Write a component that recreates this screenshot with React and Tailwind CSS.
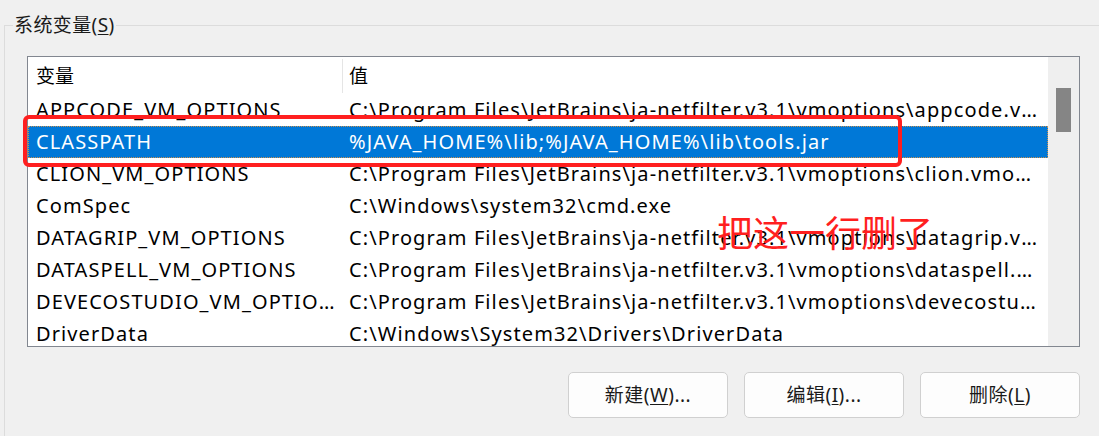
import React from "react";

const rows = [
  { name: "APPCODE_VM_OPTIONS", value: "C:\\Program Files\\JetBrains\\ja-netfilter.v3.1\\vmoptions\\appcode.vmoptions" },
  { name: "CLASSPATH", value: "%JAVA_HOME%\\lib;%JAVA_HOME%\\lib\\tools.jar", selected: true },
  { name: "CLION_VM_OPTIONS", value: "C:\\Program Files\\JetBrains\\ja-netfilter.v3.1\\vmoptions\\clion.vmoptions" },
  { name: "ComSpec", value: "C:\\Windows\\system32\\cmd.exe" },
  { name: "DATAGRIP_VM_OPTIONS", value: "C:\\Program Files\\JetBrains\\ja-netfilter.v3.1\\vmoptions\\datagrip.vmoptions" },
  { name: "DATASPELL_VM_OPTIONS", value: "C:\\Program Files\\JetBrains\\ja-netfilter.v3.1\\vmoptions\\dataspell.vmoptions" },
  { name: "DEVECOSTUDIO_VM_OPTIONS", value: "C:\\Program Files\\JetBrains\\ja-netfilter.v3.1\\vmoptions\\devecostudio.vmoptions" },
  { name: "DriverData", value: "C:\\Windows\\System32\\Drivers\\DriverData" },
];

const font = "font-['Noto_Sans','Noto_Sans_CJK_SC',sans-serif]";

function Button({ label, keyChar, dots }) {
  return (
    <button className="w-[160px] h-[46px] rounded-[5px] border border-[#d0d0d0] bg-[#fdfdfd] text-[19px] tracking-[0.5px] text-[#1a1a1a]">
      {label}(<span className="underline underline-offset-2">{keyChar}</span>){dots ? "..." : ""}
    </button>
  );
}

export default function App() {
  return (
    <div className={`${font} relative w-[1099px] h-[436px] bg-[#f0f0f0] pt-[25px] pl-[4px] overflow-hidden text-black`}>
      {/* Group box */}
      <div className="relative h-[420px] border-t border-l border-[#dcdcdc]">
        <div className="absolute left-[8px] -top-[15px] px-[1px] bg-[#f0f0f0] text-[19px] leading-[28px] tracking-[0.4px] text-[#1a1a1a]">
          系统变量(<span className="underline underline-offset-2">S</span>)
        </div>

        {/* List box */}
        <div className="ml-[22px] mt-[30px] w-[1053px] h-[291px] border border-[#828790] bg-white flex overflow-hidden">
          <div className="flex-1 flex flex-col min-w-0">
            {/* Header */}
            <div className="flex h-[37px] shrink-0 items-center text-[19px]">
              <div className="w-[314px] pl-[8px] pt-[2px]">变量</div>
              <div className="flex-1 h-[34px] border-l border-[#e5e5e5] pl-[6px] flex items-center pt-[2px]">值</div>
            </div>
            {rows.map((r) => (
              <div
                key={r.name}
                className={`flex h-[32px] shrink-0 items-center text-[20px] tracking-[1.1px] ${
                  r.selected ? "bg-[#0078d7] text-white outline-1 outline-dotted outline-[#c89050] -outline-offset-1" : ""
                }`}
              >
                <div className="w-[314px] pl-[8px] pr-[4px] truncate">{r.name}</div>
                <div className="flex-1 min-w-0 pl-[7px] pr-[8px] truncate">{r.value}</div>
              </div>
            ))}
          </div>
          {/* Scrollbar */}
          <div className="w-[31px] shrink-0 bg-[#efefef] pt-[31px] pl-[8px]">
            <div className="w-[15px] h-[44px] bg-[#858585]" />
          </div>
        </div>

        {/* Buttons */}
        <div className="flex justify-end gap-[16px] w-[1075px] mt-[25px]">
          <Button label="新建" keyChar="W" dots />
          <Button label="编辑" keyChar="I" dots />
          <Button label="删除" keyChar="L" />
        </div>
      </div>

      {/* Red annotation */}
      <div className="absolute left-[23px] top-[115px] w-[879px] h-[52px] border-[4px] border-[#ff1f1f] rounded-[6px] pointer-events-none" />
      <div className="absolute left-[717px] top-[203px] text-[36px] leading-[56px] text-[#ff1f1f] font-['Noto_Sans_CJK_SC',sans-serif]">
        把这一行删了
      </div>
    </div>
  );
}
